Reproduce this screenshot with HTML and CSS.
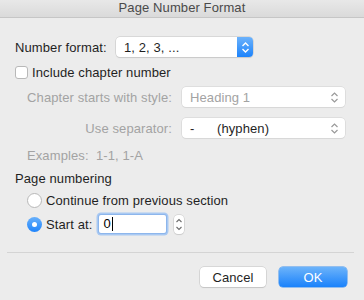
FILE: index.html
```html
<!DOCTYPE html>
<html lang="en">
<head>
  <meta charset="UTF-8" />
  <title>Page Number Format</title>
  <link rel="stylesheet" href="styles.css">
</head>
<body>
  <div class="janela">
    <div class="titulo">Page Number Format</div>

    <div class="conteudo">
      <div class="linha linha-formato">
        <span class="rotulo">Number format:</span>
        <div class="select select-azul">
          <span class="valor">1, 2, 3, ...</span>
          <span class="seta-azul">
            <svg width="9" height="13" viewBox="0 0 9 13"><path d="M1.5 5 L4.5 2 L7.5 5 M1.5 8 L4.5 11 L7.5 8" fill="none" stroke="#fff" stroke-width="1.4"/></svg>
          </span>
        </div>
      </div>

      <div class="linha linha-check">
        <span class="checkbox"></span>
        <span>Include chapter number</span>
      </div>

      <div class="linha linha-estilo">
        <span class="rotulo-dir desativado">Chapter starts with style:</span>
        <div class="select select-largo">
          <span class="valor desativado">Heading 1</span>
          <svg class="seta" width="9" height="13" viewBox="0 0 9 13"><path d="M1.5 5 L4.5 2 L7.5 5 M1.5 8 L4.5 11 L7.5 8" fill="none" stroke="#9a9a9a" stroke-width="1.2"/></svg>
        </div>
      </div>

      <div class="linha linha-separador">
        <span class="rotulo-dir desativado">Use separator:</span>
        <div class="select select-largo">
          <span class="valor"><span class="hifen">-</span>(hyphen)</span>
          <svg class="seta" width="9" height="13" viewBox="0 0 9 13"><path d="M1.5 5 L4.5 2 L7.5 5 M1.5 8 L4.5 11 L7.5 8" fill="none" stroke="#9a9a9a" stroke-width="1.2"/></svg>
        </div>
      </div>

      <div class="linha linha-exemplos desativado">Examples:&nbsp; 1-1, 1-A</div>

      <div class="linha linha-secao">Page numbering</div>

      <div class="linha linha-radio1">
        <span class="radio"></span>
        <span>Continue from previous section</span>
      </div>

      <div class="linha linha-radio2">
        <span class="radio marcado"></span>
        <span class="rotulo-inicio">Start at:</span>
        <div class="campo">0<span class="cursor"></span></div>
        <div class="stepper">
          <svg width="8" height="17" viewBox="0 0 8 17"><path d="M1.5 6 L4 3.5 L6.5 6 M1.5 11 L4 13.5 L6.5 11" fill="none" stroke="#6d6d6d" stroke-width="1.1"/></svg>
        </div>
      </div>
    </div>

    <div class="divisor"></div>

    <div class="botoes">
      <button class="botao">Cancel</button>
      <button class="botao botao-ok">OK</button>
    </div>
  </div>
</body>
</html>
```

FILE: styles.css
```css
body {
  margin: 0;
  padding: 0;
  background-color: #ececec;
  font-family: 'Liberation Sans', Arial, sans-serif;
  font-size: 13px;
  letter-spacing: 0.1px;
  color: #1f1f1f;
}

.janela {
  width: 364px;
  height: 300px;
  background-color: #ececec;
  overflow: hidden;
}

.titulo {
  height: 17px;
  line-height: 16px;
  text-align: center;
  color: #4a4a4a;
  background: linear-gradient(#e8e8e8, #dadada);
  border-bottom: 1px solid #c6c6c6;
}

.conteudo {
  padding: 19px 0 0 15px;
}

.linha {
  display: flex;
  align-items: center;
}

.linha-formato {
  height: 20px;
}

.rotulo {
  width: 101px;
}

.select {
  display: flex;
  align-items: center;
  height: 20px;
  box-sizing: border-box;
  background-color: #fff;
  border-radius: 4px;
  box-shadow: 0 0 0 0.5px #c4c4c4, 0 1px 1px rgba(0, 0, 0, 0.12);
}

.select-azul {
  width: 137px;
}

.select-azul .valor {
  flex: 1;
  padding-left: 8px;
}

.seta-azul {
  width: 16px;
  height: 20px;
  display: flex;
  align-items: center;
  justify-content: center;
  background: linear-gradient(#6cb2fb, #1c83fb);
  border-radius: 0 4px 4px 0;
}

.linha-check {
  height: 14px;
  margin-top: 8px;
}

.checkbox {
  width: 13px;
  height: 13px;
  background-color: #fff;
  border: 1px solid #b8b8b8;
  border-radius: 3px;
  margin-right: 4px;
  box-sizing: border-box;
}

.linha-estilo {
  height: 20px;
  margin-top: 8px;
  padding-left: 12px;
}

.linha-separador {
  height: 20px;
  margin-top: 11px;
  padding-left: 12px;
}

.rotulo-dir {
  width: 145px;
  text-align: right;
  margin-right: 10px;
}

.desativado {
  color: #a3a3a3;
}

.select-largo {
  width: 163px;
  box-shadow: 0 0 0 0.5px #d0d0d0, 0 1px 1px rgba(0, 0, 0, 0.06);
}

.select-largo .valor {
  flex: 1;
  padding-left: 8px;
}

.select-largo .seta {
  margin-right: 6px;
}

.hifen {
  display: inline-block;
  width: 27px;
}

.linha-exemplos {
  height: 16px;
  margin-top: 9px;
  padding-left: 12px;
}

.linha-secao {
  height: 16px;
  margin-top: 7px;
}

.linha-radio1 {
  height: 16px;
  margin-top: 6px;
  padding-left: 12px;
}

.radio {
  width: 15px;
  height: 15px;
  box-sizing: border-box;
  background-color: #fff;
  border: 1px solid #b8b8b8;
  border-radius: 50%;
  margin-right: 4px;
  position: relative;
}

.radio.marcado {
  border: none;
  background: linear-gradient(#68b0fb, #1f84fb);
}

.radio.marcado::after {
  content: "";
  position: absolute;
  left: 5px;
  top: 5px;
  width: 5px;
  height: 5px;
  border-radius: 50%;
  background-color: #fff;
}

.linha-radio2 {
  height: 22px;
  margin-top: 5px;
  padding-left: 12px;
}

.rotulo-inicio {
  margin-right: 7px;
}

.campo {
  width: 67px;
  height: 18px;
  line-height: 18px;
  background-color: #fff;
  padding-left: 4px;
  box-sizing: border-box;
  box-shadow: 0 0 0 1px #8db6ec, 0 0 0 2.5px #a9c9f2;
  border-radius: 2px;
  color: #000;
  display: flex;
  align-items: center;
}

.cursor {
  width: 1px;
  height: 14px;
  background-color: #000;
  margin-left: 1px;
}

.stepper {
  margin-left: 8px;
  width: 10px;
  height: 19px;
  background-color: #fff;
  border-radius: 4px;
  box-shadow: 0 0 0 0.5px #c4c4c4, 0 1px 1px rgba(0, 0, 0, 0.1);
  display: flex;
  align-items: center;
  justify-content: center;
}

.divisor {
  margin: 17px 10px 0 7px;
  height: 1px;
  background-color: #d4d4d4;
}

.botoes {
  display: flex;
  justify-content: flex-end;
  gap: 13px;
  padding: 14px 17px 0 0;
}

.botao {
  height: 20px;
  box-sizing: border-box;
  font-family: 'Liberation Sans', Arial, sans-serif;
  font-size: 13px;
  letter-spacing: 0.1px;
  color: #1f1f1f;
  background-color: #fff;
  border: none;
  border-radius: 4px;
  box-shadow: 0 0 0 0.5px #c2c2c2, 0 1px 1px rgba(0, 0, 0, 0.15);
  width: 66px;
  padding: 0;
}

.botao-ok {
  width: 68px;
  color: #fff;
  background: linear-gradient(#6cb3fa, #1a82fb);
  box-shadow: 0 0 0 0.5px #3b8ff0;
}
```
